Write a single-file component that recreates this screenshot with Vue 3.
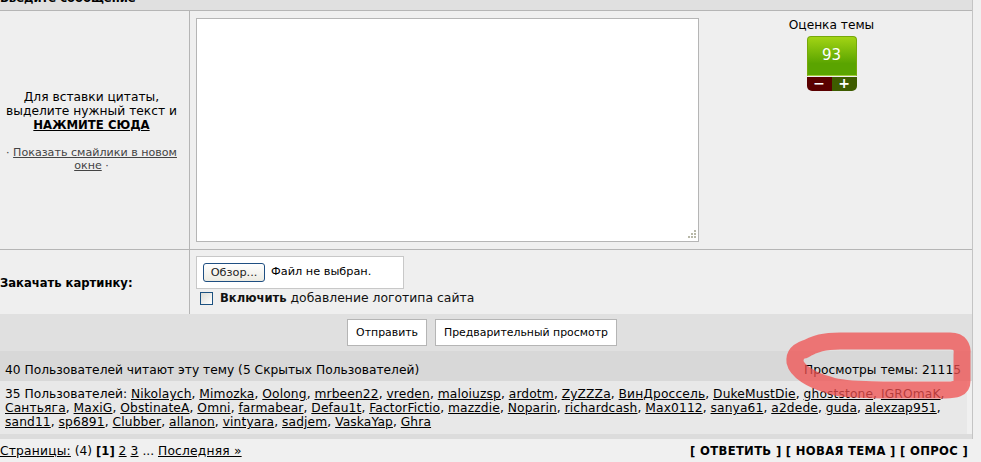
<template>
  <div class="page">
    <div class="board">
      <div class="title"><b>Введите сообщение</b></div>
      <div class="row msg">
        <div class="side">
          <p class="quote">Для вставки цитаты,<br>выделите нужный текст и<br><a class="strong">НАЖМИТЕ СЮДА</a></p>
          <p class="smile">· <a>Показать смайлики в новом окне</a> ·</p>
        </div>
        <div class="main editor">
          <div class="area">
            <svg class="grip" width="12" height="12" viewBox="0 0 12 12">
              <g fill="#b8b8a8">
                <rect x="9" y="2" width="2" height="2"/><rect x="9" y="5" width="2" height="2"/><rect x="6" y="5" width="2" height="2"/>
                <rect x="9" y="8" width="2" height="2"/><rect x="6" y="8" width="2" height="2"/><rect x="3" y="8" width="2" height="2"/>
              </g>
            </svg>
          </div>
          <div class="rating">
            <div class="rtitle">Оценка темы</div>
            <div class="score">93</div>
            <div class="vote"><span class="minus">−</span><span class="plus">+</span></div>
          </div>
        </div>
      </div>
      <div class="row upload">
        <div class="side label"><b>Закачать картинку:</b></div>
        <div class="main">
          <div class="file"><span class="browse">Обзор...</span><span>Файл не выбран.</span></div>
          <div class="check"><span class="box"></span><span><b>Включить</b> добавление логотипа сайта</span></div>
        </div>
      </div>
      <div class="actions"><span class="btn">Отправить</span><span class="btn">Предварительный просмотр</span></div>
      <div class="readers">
        <span>40 Пользователей читают эту тему (5 Скрытых Пользователей)</span>
        <span>Просмотры темы: 21115</span>
      </div>
      <div class="users">
        <div v-for="(line, n) in lines" :key="n" class="uline">
          <template v-if="n === 0">35 Пользователей: </template>
          <template v-for="(u, i) in line" :key="u"><a>{{ u }}</a>{{ i < line.length - 1 || n < 2 ? ', ' : '' }}</template>
        </div>
      </div>
      <div class="strip"></div>
    </div>
    <div class="pager">
      <span class="pages"><a>Страницы:</a> (4) <b>[1]</b> <a>2</a> <a>3</a> ... <a>Последняя »</a></span>
      <b class="links">[ ОТВЕТИТЬ ] [ НОВАЯ ТЕМА ] [ ОПРОС ]</b>
    </div>
    <svg class="scribble" width="200" height="90" viewBox="0 0 200 90">
      <path d="M24 25 C35 18 45 16 60 16 L170 16 C180 16 183 22 182 30 L182 56 C182 64 175 65 165 65 L110 65 C90 64 65 66 49 60 C31 55 17 46 15 37 C14 28 22 24 30 22" fill="none" stroke="#f05050" stroke-width="17" stroke-linecap="round" stroke-linejoin="round" opacity=".75"/>
    </svg>
  </div>
</template>

<script setup>
const lines = [
  ['Nikolaych','Mimozka','Oolong','mrbeen22','vreden','maloiuzsp','ardotm','ZyZZZa','ВинДроссель','DukeMustDie','ghoststone','IGROmaK'],
  ['Сантьяга','MaxiG','ObstinateA','Omni','farmabear','Defau1t','FactorFictio','mazzdie','Noparin','richardcash','Max0112','sanya61','a2dede','guda','alexzap951'],
  ['sand11','sp6891','Clubber','allanon','vintyara','sadjem','VaskaYap','Ghra']
]
</script>

<style>
html, body { margin: 0; background: #f0f0f0; }
</style>

<style scoped>
.page { position: relative; width: 981px; height: 462px; overflow: hidden; background: #f0f0f0; font: 12.25px/14px "DejaVu Sans", Verdana, sans-serif; color: #000; }
a { text-decoration: underline; color: #000; }
p { margin: 0; }
b { font-size: 11.6px; }
.board { width: 973px; border-right: 1px solid #c4c4c4; box-sizing: border-box; }
.title { height: 10px; background: #e0e0e0; border-bottom: 1px solid #b5b5b5; overflow: hidden; }
.title b { display: block; margin-top: -8px; line-height: 13px; font-size: 11.6px; }
.row { display: flex; border-bottom: 1px solid #b5b5b5; background: #efefef; }
.side { flex: none; width: 190px; box-sizing: border-box; border-right: 1px solid #b5b5b5; }
.msg { height: 238px; }
.msg .side { display: flex; flex-direction: column; justify-content: flex-end; align-items: center; text-align: center; padding: 0 6px 77px 0; }
.quote { width: 180px; }
.strong { font-weight: bold; font-size: 11.7px; }
.smile { margin-top: 14px; color: #444; width: 180px; line-height: 13px; font-size: 11.1px; }
.smile a { color: #444; }
.main { flex: 1; }
.editor { display: flex; padding: 7px 0 0 6px; }
.area { position: relative; width: 501px; height: 222px; background: #fff; border: 1px solid #b5b5b5; }
.grip { position: absolute; right: 1px; bottom: 1px; }
.rating { flex: 1; display: flex; flex-direction: column; align-items: center; padding: 1px 8px 0 0; }
.rtitle { line-height: 13px; margin-bottom: 4px; font-size: 12.2px; }
.score { width: 50px; height: 40px; box-sizing: border-box; border: 1px solid #76a80a; border-bottom: 1px solid #a4cf3a; border-radius: 4px 4px 0 0; background: linear-gradient(#a2d414, #5aa400 70%); color: #fff; text-align: center; font-size: 15px; line-height: 37px; }
.vote { display: flex; width: 50px; height: 14px; margin-top: 1px; border-radius: 0 0 5px 5px; overflow: hidden; color: #fff; font-weight: bold; font-size: 14px; line-height: 13px; text-align: center; }
.vote span { flex: 1; }
.minus { background: #5a0000; }
.plus { background: #3e5c00; }
.upload { height: 64px; border-bottom: 0; }
.label { display: flex; align-items: center; padding-top: 2px; }
.upload .main { padding: 6px 0 0 6px; }
.file { width: 208px; height: 33px; box-sizing: border-box; background: #fff; border: 1px solid #c8c8c8; display: flex; align-items: center; gap: 6px; padding: 0 6px 1px; font-size: 11.3px; }
.browse { width: 62px; height: 19px; box-sizing: border-box; border: 1px solid #1f4f82; border-radius: 3px; background: linear-gradient(#fff, #ecebe2); text-align: center; line-height: 17px; color: #222; }
.check { display: flex; align-items: center; gap: 7px; margin: 2px 0 0 4px; color: #111; font-size: 12.4px; }
.box { width: 11px; height: 11px; border: 1px solid #1c5180; background: linear-gradient(135deg, #dcdcd6, #fff); }
.actions { height: 37px; background: #e0e0e0; display: flex; justify-content: center; align-items: flex-start; gap: 8px; padding: 5px 8px 0 0; box-sizing: border-box; }
.btn { height: 27px; box-sizing: border-box; background: #fff; border: 1px solid #b5b5b5; padding: 0 8px; line-height: 26px; font-size: 10.9px; }
.readers { height: 30px; background: #d8d8d8; display: flex; justify-content: space-between; align-items: center; padding: 8px 11px 0 5px; box-sizing: border-box; }
.users { height: 53px; background: #e8e8e8; padding: 6px 5px 0; box-sizing: border-box; margin-right: 5px; }
.uline { white-space: nowrap; }
.uline a { letter-spacing: .13px; }
.strip { height: 5px; background: #dcdcdc; }
.pager { display: flex; justify-content: space-between; align-items: baseline; width: 968px; padding-top: 5px; }
.pages a { letter-spacing: .2px; }
.links { letter-spacing: .32px; }
.scribble { position: absolute; left: 780px; top: 325px; pointer-events: none; }
</style>
